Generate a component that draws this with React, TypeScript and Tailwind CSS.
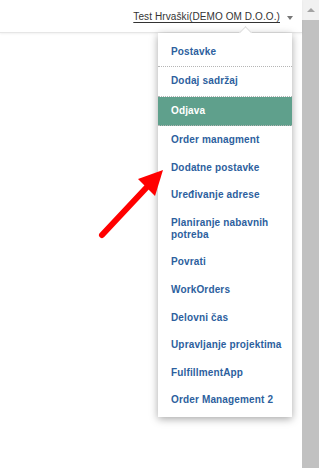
const items = [
  { label: 'Postavke', sep: true },
  { label: 'Dodaj sadržaj', sep: true },
  { label: 'Odjava', sep: true, active: true },
  { label: 'Order managment' },
  { label: 'Dodatne postavke' },
  { label: 'Uređivanje adrese' },
  { label: 'Planiranje nabavnih potreba' },
  { label: 'Povrati' },
  { label: 'WorkOrders' },
  { label: 'Delovni čas' },
  { label: 'Upravljanje projektima' },
  { label: 'FulfillmentApp' },
  { label: 'Order Management 2' },
];

export default function App() {
  return (
    <div
      className="flex w-[319px] h-[468px] overflow-hidden bg-white"
      style={{ fontFamily: '"Liberation Sans", Arial, sans-serif' }}
    >
      {/* page */}
      <div className="relative flex-1 flex flex-col">
        <header className="h-[33px] flex items-start justify-end pr-[9px] pt-[10px] border-b border-[#e6e6e6] shadow-[0_1px_2px_rgba(0,0,0,0.06)]">
          <a className="text-[10px] leading-[14px] text-[#333] underline underline-offset-[2px] tracking-[0.1px]">
            Test Hrvaški(DEMO OM D.O.O.)
          </a>
          <span className="ml-[7px] mt-[6px] w-0 h-0 border-l-[3px] border-r-[3px] border-t-[4px] border-l-transparent border-r-transparent border-t-[#777]" />
        </header>

        {/* dropdown */}
        <div className="absolute left-[158px] top-[33px] w-[134px] bg-white pt-[5px] pb-[3px] shadow-[0_2px_8px_rgba(0,0,0,0.35)]">
          <div className="absolute -top-[5px] left-[83px] w-[9px] h-[9px] rotate-45 bg-white border-l border-t border-[#dcdcdc]" />
          {items.map((it) => (
            <div
              key={it.label}
              className={
                'relative pl-[13px] pr-[8px] text-[10px] leading-[12px] font-bold tracking-[0.15px] ' +
                (it.active ? 'bg-[#5fa08c] text-white ' : 'text-[#2d5f9e] ') +
                (it.sep ? 'pt-[8px] pb-[8.4px] border-b border-dotted border-[#b5b5b5]' : 'py-[7.8px]')
              }
            >
              {it.label}
            </div>
          ))}
        </div>

        {/* red arrow */}
        <svg className="absolute left-[95px] top-[165px]" width="75" height="80" viewBox="0 0 75 80">
          <line x1="7" y1="70" x2="52" y2="22" stroke="#f00" strokeWidth="6" strokeLinecap="round" />
          <polygon points="68,5 43,14 60,31" fill="#f00" />
        </svg>
      </div>

      {/* scrollbar */}
      <div className="w-[17px] flex flex-col bg-[#f1f1f1]">
        <div className="h-[20px] flex items-center justify-center">
          <span className="w-0 h-0 border-l-[4px] border-r-[4px] border-b-[4px] border-l-transparent border-r-transparent border-b-[#a3a3a3]" />
        </div>
        <div className="flex-1 bg-[#c1c1c1]" />
      </div>
    </div>
  );
}
